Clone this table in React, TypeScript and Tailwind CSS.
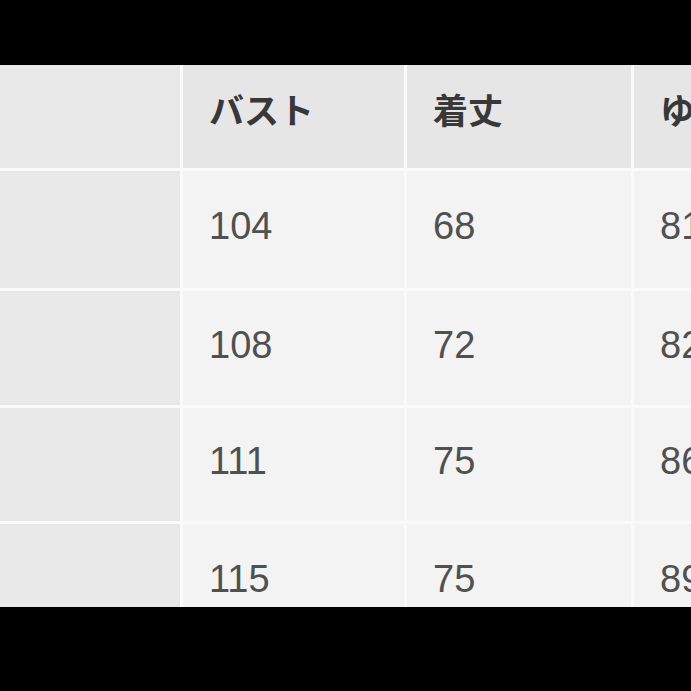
const header = ["", "バスト", "着丈", "ゆき丈"];
const rows = [
  ["104", "68", "81"],
  ["108", "72", "82"],
  ["111", "75", "86"],
  ["115", "75", "89"],
];

export default function App() {
  return (
    <div className="w-[691px] h-[691px] bg-black pt-[65px] overflow-hidden">
      <div className="h-[542px] overflow-hidden bg-[#fafafa]">
        <div className="grid grid-cols-[180px_221px_224px_160px] grid-rows-[103px_117px_114px_113px_116px] gap-[3px] w-[800px]">
          {header.map((h, i) => (
            <div
              key={i}
              className={`flex items-center whitespace-nowrap pl-[26px] pb-[14px] text-[35px] font-bold text-[#383838] ${
                i === 0 ? "bg-[#e8e8e8]" : "bg-[#e6e6e6]"
              }`}
              style={{ fontFamily: '"Noto Sans CJK JP", sans-serif' }}
            >
              {h}
            </div>
          ))}
          {rows.map((r, ri) => [
            <div key={`c${ri}`} className="bg-[#e8e8e8]" />,
            ...r.map((v, ci) => (
              <div
                key={`${ri}-${ci}`}
                className="flex items-center whitespace-nowrap pl-[26px] pb-[6px] bg-[#f3f3f3] text-[38px] text-[#505050]"
                style={{ fontFamily: '"Liberation Sans", sans-serif' }}
              >
                {v}
              </div>
            )),
          ])}
        </div>
      </div>
    </div>
  );
}
